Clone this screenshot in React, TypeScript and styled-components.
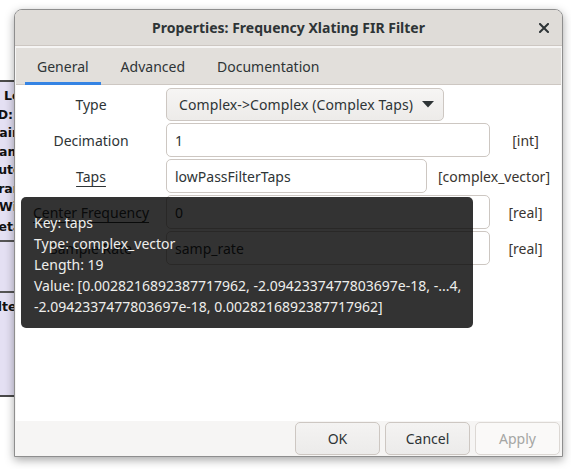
import * as React from 'react';
import styled, { createGlobalStyle } from 'styled-components';

const GlobalStyle = createGlobalStyle`
  html, body {
    margin: 0;
    padding: 0;
    background: #ffffff;
  }
  body {
    font-family: "Noto Sans", "Open Sans", sans-serif;
    font-size: 14px;
    color: #2e3436;
  }
  * {
    box-sizing: border-box;
  }
`;

const Desktop = styled.div`
  position: relative;
  width: 571px;
  height: 469px;
  overflow: hidden;
  background: #ffffff;
  padding: 9px 0 0 14px;
`;

// flowgraph block peeking out from behind the dialog
const CanvasBlock = styled.div`
  position: absolute;
  left: -130px;
  top: 80px;
  width: 144px;
  height: 317px;
  background: #e4e0f3;
  border-top: 2px solid #4a4a4a;
  border-bottom: 2px solid #4a4a4a;
`;

const BlockSeparator = styled.div<{ $top: number }>`
  position: absolute;
  left: 0;
  right: 0;
  top: ${(p) => p.$top}px;
  height: 2px;
  background: #555555;
`;

const BlockText = styled.span<{ $top: number; $left: number }>`
  position: absolute;
  top: ${(p) => p.$top}px;
  left: ${(p) => p.$left}px;
  font-family: "DejaVu Sans", sans-serif;
  font-weight: bold;
  font-size: 12.5px;
  line-height: 16px;
  color: #111111;
  white-space: nowrap;
`;

const Dialog = styled.div`
  position: relative;
  z-index: 1;
  width: 549px;
  height: 448px;
  display: flex;
  flex-direction: column;
  background: #f6f5f4;
  border: 1px solid #8e8e8e;
  border-radius: 8px 8px 0 0;
  box-shadow: 0 3px 10px rgba(0, 0, 0, 0.35);
`;

const TitleBar = styled.div`
  position: relative;
  height: 36px;
  flex: none;
  display: flex;
  align-items: center;
  justify-content: center;
  background: #dfdcd8;
  border-bottom: 1px solid #cdc7c2;
  border-radius: 7px 7px 0 0;
`;

const Title = styled.span`
  font-weight: bold;
  font-size: 14px;
  color: #2e3436;
`;

const CloseButton = styled.span`
  position: absolute;
  right: 13px;
  top: 13px;
  width: 10px;
  height: 10px;
  display: flex;
`;

const Body = styled.div`
  flex: 1;
  display: flex;
  flex-direction: column;
  padding: 2px 1px 0 1px;
`;

const TabBar = styled.div`
  height: 37px;
  flex: none;
  display: flex;
  gap: 8px;
  padding-left: 9px;
  background: #e2dfdb;
  border-bottom: 1px solid #cdc7c2;
`;

const Tab = styled.div<{ $active?: boolean }>`
  display: flex;
  align-items: center;
  padding: 3px 12px 0;
  color: #2e3436;
  border-bottom: 3px solid ${(p) => (p.$active ? '#3584e4' : 'transparent')};
  margin-bottom: -1px;
`;

const Page = styled.div`
  height: 336px;
  flex: none;
  background: #ffffff;
  padding-top: 1px;
`;

const Row = styled.div`
  height: 36px;
  display: flex;
  align-items: center;
`;

const FieldLabel = styled.div<{ $underline?: boolean }>`
  width: 150px;
  flex: none;
  text-align: center;
  text-decoration: ${(p) => (p.$underline ? 'underline' : 'none')};
  text-underline-offset: 4px;
`;

const Entry = styled.input<{ $fill?: boolean }>`
  flex: ${(p) => (p.$fill ? '1' : 'none')};
  width: 0;
  min-width: 0;
  height: 34px;
  padding: 0 8px;
  border: 1px solid #cdc7c2;
  border-radius: 5px;
  background: #ffffff;
  font-family: "Noto Sans", "Open Sans", sans-serif;
  font-size: 14px;
  color: #2e3436;
  outline: none;
`;

const Combo = styled.div`
  height: 33px;
  display: flex;
  align-items: center;
  gap: 9px;
  padding: 0 9px 0 12px;
  border: 1px solid #cdc7c2;
  border-radius: 5px;
  background: linear-gradient(#f6f5f4, #edebe9);
  color: #2e3436;
  letter-spacing: 0.1px;
`;

const TypeLabel = styled.div`
  flex: none;
  min-width: 71px;
  padding: 0 11px;
  text-align: center;
  color: #3a3530;
`;

const ButtonBar = styled.div`
  flex: 1;
  display: flex;
  justify-content: flex-end;
  align-items: flex-start;
  gap: 5px;
  padding: 1px 1px 0 0;
`;

const Button = styled.div<{ $disabled?: boolean }>`
  width: 85px;
  height: 33px;
  display: flex;
  align-items: center;
  justify-content: center;
  border: 1px solid ${(p) => (p.$disabled ? '#dcd8d4' : '#cdc7c2')};
  border-radius: 5px;
  background: ${(p) => (p.$disabled ? '#faf9f8' : 'linear-gradient(#f4f3f2, #ecebea)')};
  color: ${(p) => (p.$disabled ? '#a5a6a4' : '#2e3436')};
`;

const Tooltip = styled.div`
  position: absolute;
  left: 6px;
  top: 187px;
  width: 452px;
  height: 131px;
  padding: 15px 13px 10px;
  background: rgba(0, 0, 0, 0.8);
  border-radius: 5px;
  color: #eeeeec;
  font-size: 14px;
  line-height: 21px;
  white-space: nowrap;
`;

const tooltipLines = [
  'Key: taps',
  'Type: complex_vector',
  'Length: 19',
  'Value: [0.0028216892387717962, -2.0942337477803697e-18, -...4,',
  '-2.0942337477803697e-18, 0.0028216892387717962]',
];

const blockTexts = [
  { text: 'Low Pass Filter', top: 6, left: 134 },
  { text: 'ID: low_pass', top: 25, left: 123 },
  { text: 'Gain: 1', top: 43, left: 119 },
  { text: 'Sample Rate: 32k', top: 62, left: 120 },
  { text: 'Cutoff Freq: 2k', top: 80, left: 119 },
  { text: 'Transition Width: 1k', top: 99, left: 121 },
  { text: 'Window: Hamming', top: 117, left: 129 },
  { text: 'Beta: 6.76', top: 137, left: 119 },
  { text: 'Filter Taps', top: 217, left: 115 },
];

const CloseIcon = () => (
  <svg width="10" height="10" viewBox="0 0 10 10">
    <path d="M1 1 L9 9 M9 1 L1 9" stroke="#2e3436" strokeWidth="2" strokeLinecap="square" />
  </svg>
);

const DropArrow = () => (
  <svg width="12" height="8" viewBox="0 0 12 8">
    <polygon points="0,1 12,1 6,7.5" fill="#2e3436" />
  </svg>
);

export default function App() {
  return (
    <>
      <GlobalStyle />
      <Desktop>
        <CanvasBlock>
          {blockTexts.map((b) => (
            <BlockText key={b.text} $top={b.top} $left={b.left}>
              {b.text}
            </BlockText>
          ))}
          <BlockSeparator $top={158} />
          <BlockSeparator $top={209} />
        </CanvasBlock>
        <Dialog>
          <TitleBar>
            <Title>Properties: Frequency Xlating FIR Filter</Title>
            <CloseButton>
              <CloseIcon />
            </CloseButton>
          </TitleBar>
          <Body>
            <TabBar>
              <Tab $active>General</Tab>
              <Tab>Advanced</Tab>
              <Tab>Documentation</Tab>
            </TabBar>
            <Page>
              <Row>
                <FieldLabel>Type</FieldLabel>
                <Combo>
                  Complex-&gt;Complex (Complex Taps)
                  <DropArrow />
                </Combo>
              </Row>
              <Row>
                <FieldLabel>Decimation</FieldLabel>
                <Entry $fill readOnly value="1" />
                <TypeLabel>[int]</TypeLabel>
              </Row>
              <Row>
                <FieldLabel $underline>Taps</FieldLabel>
                <Entry $fill readOnly value="lowPassFilterTaps" />
                <TypeLabel>[complex_vector]</TypeLabel>
              </Row>
              <Row>
                <FieldLabel $underline>Center Frequency</FieldLabel>
                <Entry $fill readOnly value="0" />
                <TypeLabel>[real]</TypeLabel>
              </Row>
              <Row>
                <FieldLabel>Sample Rate</FieldLabel>
                <Entry $fill readOnly value="samp_rate" />
                <TypeLabel>[real]</TypeLabel>
              </Row>
            </Page>
            <ButtonBar>
              <Button>OK</Button>
              <Button>Cancel</Button>
              <Button $disabled>Apply</Button>
            </ButtonBar>
          </Body>
          <Tooltip>
            {tooltipLines.map((line) => (
              <div key={line}>{line}</div>
            ))}
          </Tooltip>
        </Dialog>
      </Desktop>
    </>
  );
}
